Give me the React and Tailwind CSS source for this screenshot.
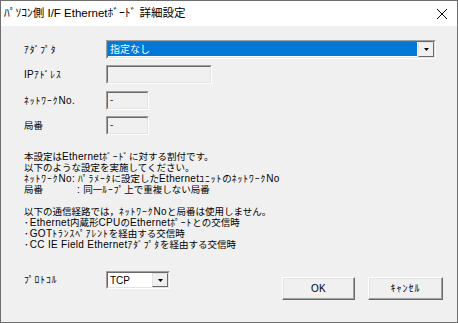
const font = { fontFamily: '"Liberation Sans", "Noto Sans CJK JP", sans-serif' };

// the original bitmap UI font has wider latin and half-width kana than Noto,
// so each run gets a little extra room
function K({ text }) {
  const parts = text.split(/([\uFF61-\uFF9F]+|[\x21-\x7E][\x20-\x7E]*)/);
  return parts.map((p, i) => {
    if (!p) return null;
    if (/^[\uFF61-\uFF9F]/.test(p))
      return (
        <span key={i} className="tracking-[1px]">
          {p}
        </span>
      );
    if (/^[\x21-\x7E]/.test(p))
      return (
        <span key={i} className="text-[10px] tracking-[0.3px]">
          {p}
        </span>
      );
    return <span key={i}>{p}</span>;
  });
}

function Sunken({ className = "", children }) {
  return (
    <div
      className={`border border-t-[#a0a0a0] border-l-[#a0a0a0] border-b-white border-r-white ${className}`}
    >
      <div className="h-full w-full border border-t-[#696969] border-l-[#696969] border-b-[#e3e3e3] border-r-[#e3e3e3]">
        {children}
      </div>
    </div>
  );
}

function DropButton() {
  return (
    <div className="h-full w-[16px] border border-t-[#e3e3e3] border-l-[#e3e3e3] border-b-[#696969] border-r-[#696969] bg-[#f0f0f0] flex items-center justify-center">
      <svg width="5" height="3" viewBox="0 0 5 3">
        <path d="M0 0h5L2.5 3z" fill="#000" />
      </svg>
    </div>
  );
}

function Label({ children }) {
  return (
    <div className="w-[82px] text-[9.5px] leading-none">
      <K text={children} />
    </div>
  );
}

function Button({ children, className = "" }) {
  return (
    <button
      className={`h-[23px] text-[10px] bg-[#f0f0f0] border border-t-white border-l-white border-b-[#696969] border-r-[#696969] shadow-[inset_-1px_-1px_0_#a0a0a0,inset_1px_1px_0_#e3e3e3] ${className}`}
    >
      <K text={children} />
    </button>
  );
}

export default function App() {
  const notes = [
    "本設定はEthernetﾎﾞｰﾄﾞに対する割付です。",
    "以下のような設定を実施してください。",
    "ﾈｯﾄﾜｰｸNo: ﾊﾟﾗﾒｰﾀに設定したEthernetﾕﾆｯﾄのﾈｯﾄﾜｰｸNo",
  ];
  const routes = [
    "以下の通信経路では，ﾈｯﾄﾜｰｸNoと局番は使用しません。",
    "･Ethernet内蔵形CPUのEthernetﾎﾟｰﾄとの交信時",
    "･GOTﾄﾗﾝｽﾍﾟｱﾚﾝﾄを経由する交信時",
    "･CC IE Field Ethernetｱﾀﾞﾌﾟﾀを経由する交信時",
  ];

  return (
    <div
      style={font}
      className="w-[458px] h-[323px] border border-[#6e6e6e] bg-[#f0f0f0] flex flex-col text-black"
    >
      <div className="h-[25px] bg-white flex items-center pl-[3px] pr-[10px]">
        <span className="text-[11.5px]">ﾊﾟｿｺﾝ側 I/F Ethernetﾎﾞｰﾄﾞ 詳細設定</span>
        <svg className="ml-auto" width="10" height="10" viewBox="0 0 10 10">
          <path d="M0 0L10 10M10 0L0 10" stroke="#000" strokeWidth="1" />
        </svg>
      </div>

      <div className="flex-1 flex flex-col pl-[23px] pr-[14px] pt-[14px]">
        <div className="flex items-center h-[19px]">
          <Label>ｱﾀﾞﾌﾟﾀ</Label>
          <Sunken className="w-[330px] h-[19px]">
            <div className="flex h-full bg-white">
              <div className="flex-1 bg-[#0078d7] text-white text-[10px] flex items-center pl-[2px] mb-[1px] mr-[1px]">
                指定なし
              </div>
              <DropButton />
            </div>
          </Sunken>
        </div>

        <div className="flex items-center h-[19px] mt-[6px]">
          <Label>IPｱﾄﾞﾚｽ</Label>
          <Sunken className="w-[106px] h-[19px]" />
        </div>

        <div className="flex items-center h-[19px] mt-[7px]">
          <Label>ﾈｯﾄﾜｰｸNo.</Label>
          <Sunken className="w-[43px] h-[19px]">
            <div className="text-[10px] pl-[2px] leading-[13px] text-[#333]">-</div>
          </Sunken>
        </div>

        <div className="flex items-center h-[19px] mt-[6px]">
          <Label>局番</Label>
          <Sunken className="w-[43px] h-[19px]">
            <div className="text-[10px] pl-[2px] leading-[13px] text-[#333]">-</div>
          </Sunken>
        </div>

        <div className="mt-[16px] text-[9.5px] leading-[11px] whitespace-pre">
          {notes.map((t) => (
            <div key={t}>
              <K text={t} />
            </div>
          ))}
          <div className="flex">
            <span className="w-[53px]">局番</span>
            <span>
              <K text=": 同一ﾙｰﾌﾟ上で重複しない局番" />
            </span>
          </div>
          <div className="h-[11px]" />
          {routes.map((t) => (
            <div key={t}>
              <K text={t} />
            </div>
          ))}
        </div>

        <div className="flex mt-[21px]">
          <div className="flex items-center h-[18px]">
            <Label>ﾌﾟﾛﾄｺﾙ</Label>
            <Sunken className="w-[64px] h-[18px]">
              <div className="flex h-full bg-white">
                <div className="flex-1 text-[10px] flex items-center pl-[2px]">TCP</div>
                <DropButton />
              </div>
            </Sunken>
          </div>
          <div className="ml-auto flex gap-[13px] mt-[6px]">
            <Button className="w-[73px]">OK</Button>
            <Button className="w-[75px]">ｷｬﾝｾﾙ</Button>
          </div>
        </div>
      </div>
    </div>
  );
}
